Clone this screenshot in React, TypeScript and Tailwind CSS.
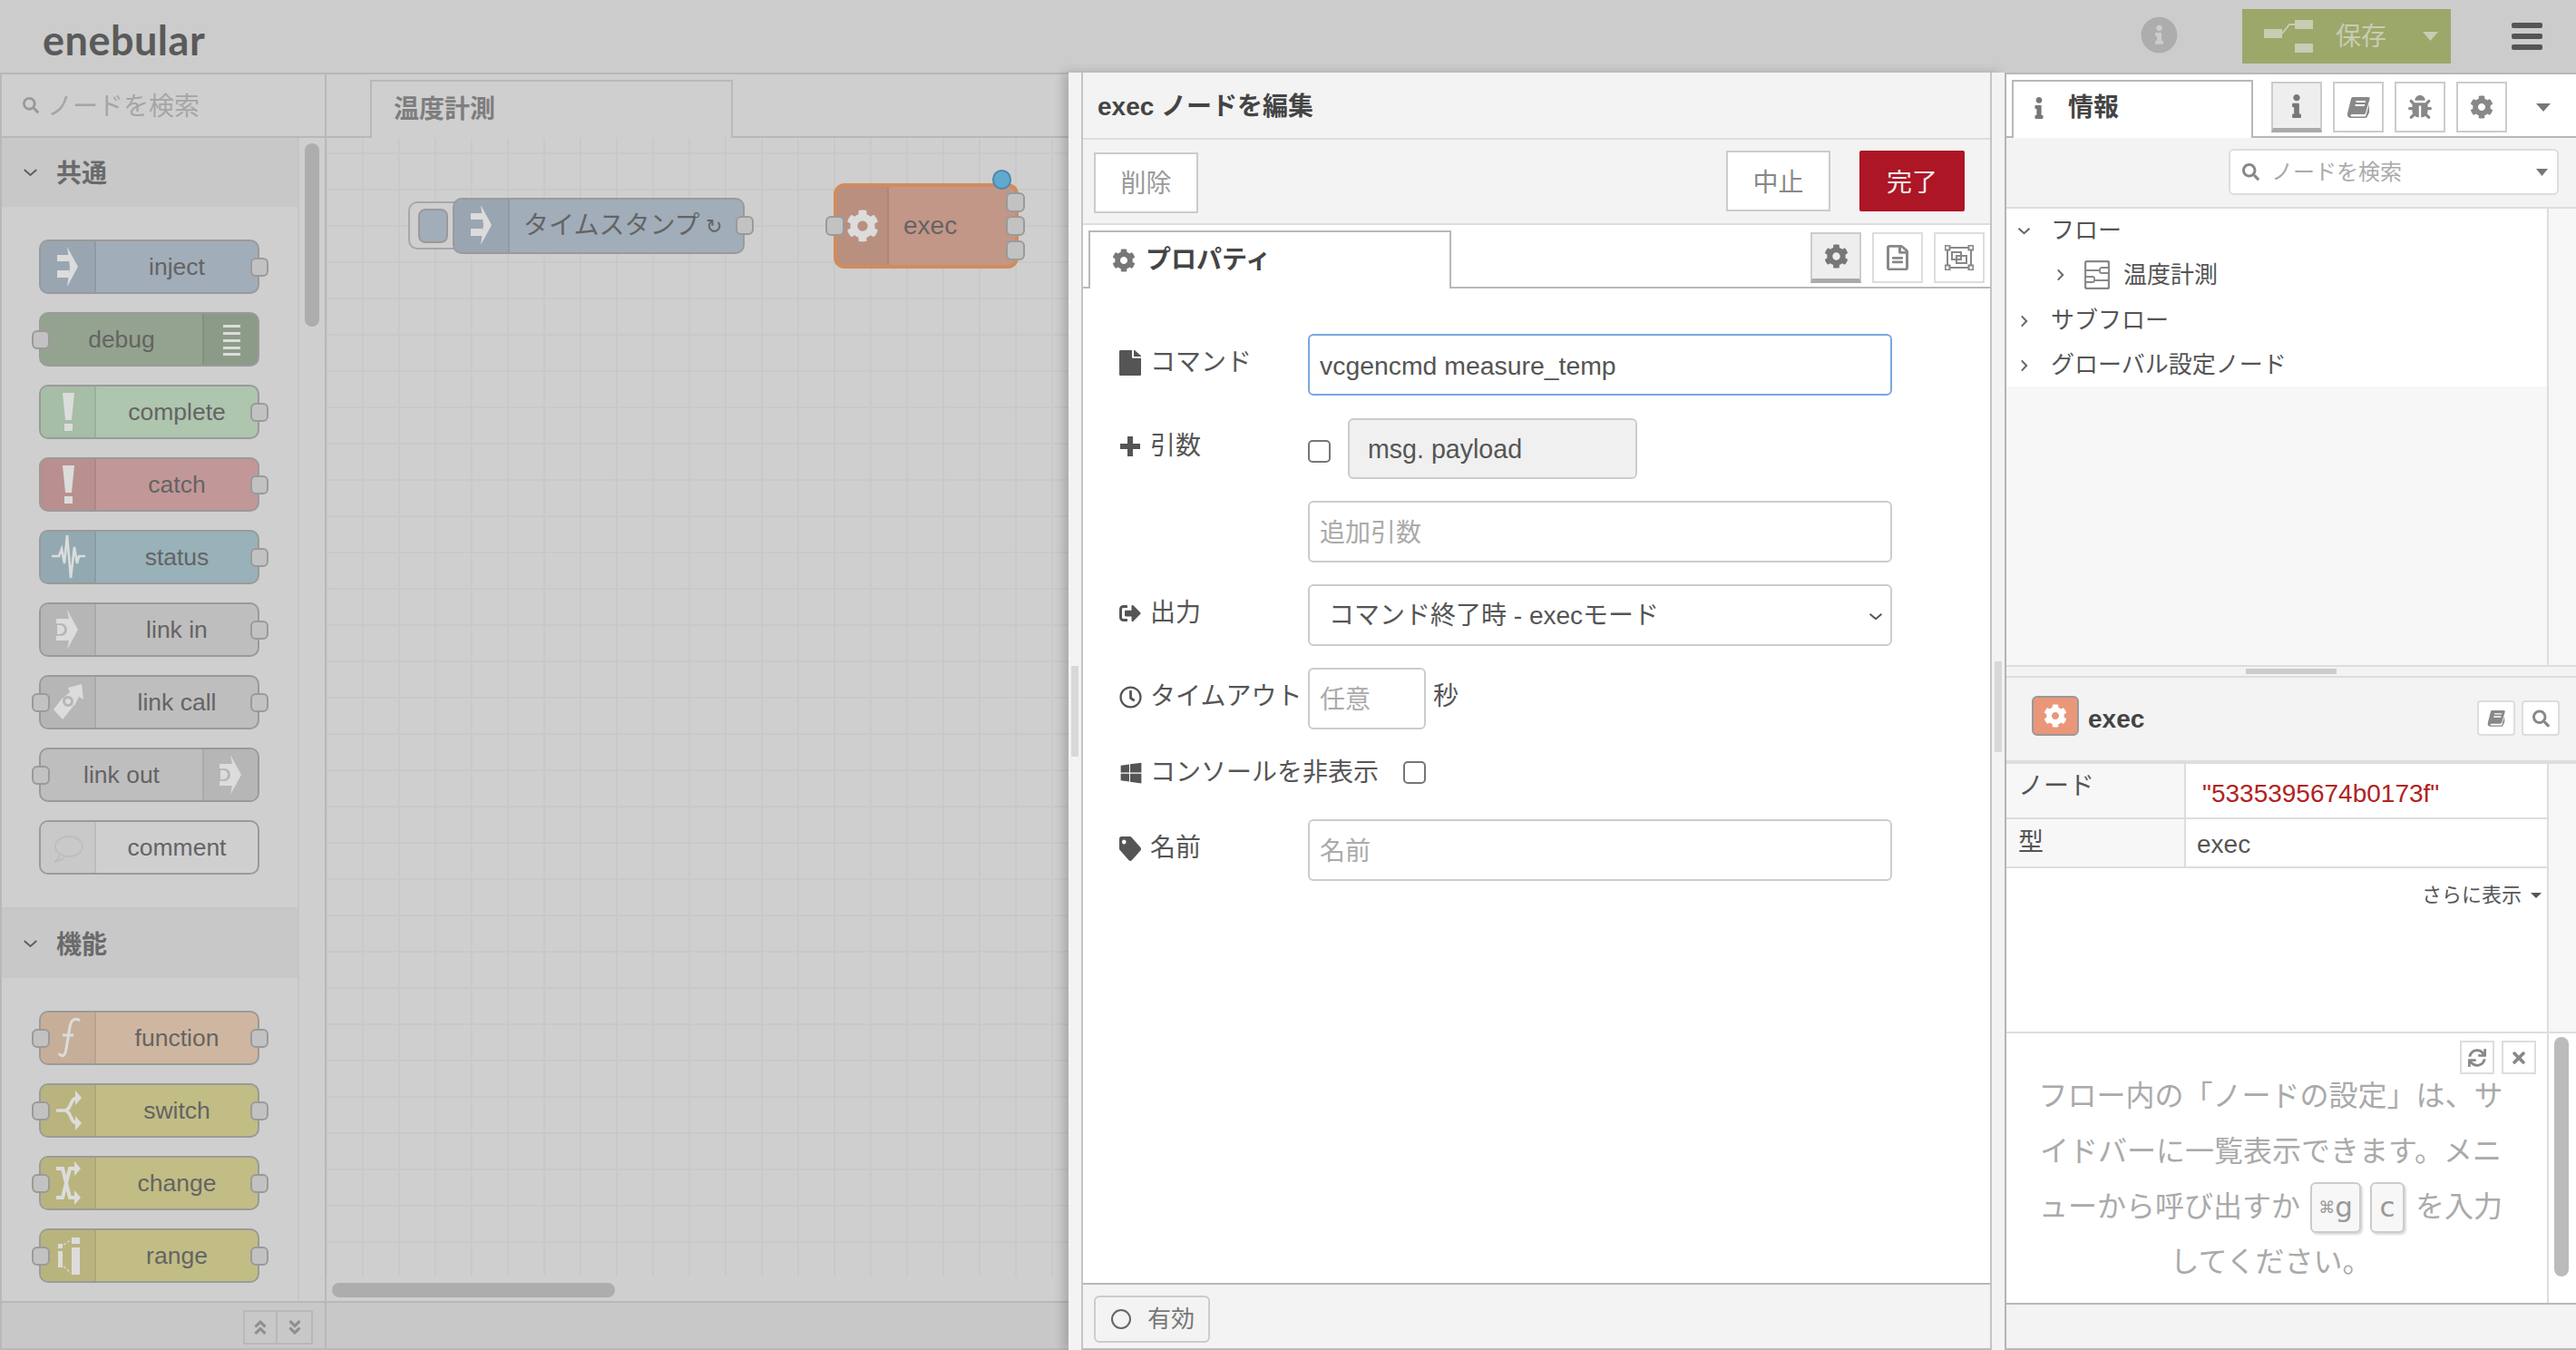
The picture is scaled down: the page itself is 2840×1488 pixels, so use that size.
import React from "react";
import {
  FaCog, FaFile, FaSignOutAlt, FaRegClock, FaWindows, FaTag, FaInfo, FaBug, FaSearch,
  FaTimes, FaSync, FaInfoCircle, FaRegFileAlt, FaAngleDoubleUp, FaAngleDoubleDown,
} from "react-icons/fa";

const FONT = "font-['Liberation_Sans','Noto_Sans_CJK_JP',sans-serif]";

function Caret({ w, h, cls }: { w: number; h: number; cls: string }) {
  return (
    <svg width={w} height={h} viewBox="0 0 10 6" preserveAspectRatio="none" className={cls}>
      <polygon points="0,0 10,0 5,6" fill="currentColor" />
    </svg>
  );
}
function Chev({ dir, w, h, cls }: { dir: "down" | "right"; w: number; h: number; cls: string }) {
  return (
    <svg width={w} height={h} viewBox="0 0 10 10" preserveAspectRatio="none" className={cls}>
      <path d={dir === "down" ? "M1 2 L5 8 L9 2" : "M2 1 L8 5 L2 9"} fill="none" stroke="currentColor" vectorEffect="non-scaling-stroke" strokeWidth="2" />
    </svg>
  );
}
function BookIcon({ w, h, cls }: { w: number; h: number; cls: string }) {
  return (
    <svg width={w} height={h} viewBox="0 0 26 24" className={cls}>
      <path
        d="M7 1 H24 C25.5 1 26 2 25.5 3.5 L21 18.5 C20.6 19.5 20 20 19 20 H6 C4 20 4 22.5 6 22.5 H21 L25 9 V18 L22.5 23.2 C22 23.8 21.5 24 21 24 H5 C2 24 0.5 21.5 1 19 L5 3 C5.3 1.8 6 1 7 1Z"
        fill="currentColor"
      />
      <path d="M10.5 6 H21 M9.5 10 H20" stroke="#fff" strokeWidth="1.8" />
    </svg>
  );
}

const ICON = "#dcdcdc";
function Svg({ children }: { children: React.ReactNode }) {
  return <svg width="63" height="60" viewBox="2 2 63 60" className="block">{children}</svg>;
}
const InjectIcon = () => (
  <Svg>
    <rect x="20" y="17" width="13" height="7" fill={ICON} />
    <rect x="20" y="34" width="13" height="8" fill={ICON} />
    <polygon points="31,8 43,30 31,52 34,30" fill={ICON} />
  </Svg>
);
const BangIcon = () => (
  <Svg>
    <polygon points="26,9 39,9 36,39 29,39" fill={ICON} />
    <rect x="28" y="43" width="9" height="8" fill={ICON} />
  </Svg>
);
const StatusIcon = () => (
  <Svg>
    <path d="M14 29 H22 L25 21 L28 37 L31 6 L35 53 L39 19 L42 37 L44 29 H51" fill="none" stroke={ICON} strokeWidth="2.6" />
  </Svg>
);
const LinkIcon = ({ bg }: { bg: string }) => (
  <Svg>
    <polygon points="19,18 33,18 31,8 43,30 31,52 33,42 19,42" fill={ICON} />
    <circle cx="24" cy="30" r="7" fill={bg} />
    <rect x="17" y="23" width="4" height="14" fill={bg} />
    <path d="M20 25 H23 A5 5 0 0 1 23 35 H20 Z" fill={ICON} />
  </Svg>
);
const LinkCallIcon = ({ bg }: { bg: string }) => (
  <Svg>
    <polygon points="32,14 47,10 49,27 44,24 39,34 27,25 34,19" fill={ICON} />
    <polygon points="16,38 26,25 38,34 26,49" fill={ICON} />
    <circle cx="32" cy="29" r="6" fill={bg} />
    <circle cx="32" cy="29" r="3" fill={ICON} />
  </Svg>
);
const CommentIcon = () => (
  <Svg>
    <ellipse cx="33" cy="29" rx="15" ry="11" fill="none" stroke="#bdbdbd" strokeWidth="1.8" />
    <path d="M23 38 C22 41 20 44 17 46 C22 45 27 43 29 40" fill="none" stroke="#bdbdbd" strokeWidth="1.8" />
  </Svg>
);
const FunctionIcon = () => (
  <Svg>
    <path d="M45 11 C40 7 35 10 34 18 L30 42 C29 50 25 52 22 47" fill="none" stroke={ICON} strokeWidth="3" />
    <path d="M26 27 H38" fill="none" stroke={ICON} strokeWidth="3" />
  </Svg>
);
const SwitchIcon = () => (
  <Svg>
    <path d="M19 30 H28 M42 16 C34 16 36 30 28 30 C36 30 34 44 42 44" fill="none" stroke={ICON} strokeWidth="3.6" />
    <polygon points="40,8 47,16 40,24" fill={ICON} />
    <polygon points="40,36 47,44 40,52" fill={ICON} />
  </Svg>
);
const ChangeIcon = () => (
  <Svg>
    <path d="M19 14 H26 L34 46 H41 M19 46 H26 L34 14 H41" fill="none" stroke={ICON} strokeWidth="4" />
    <polygon points="39,6 46,14 39,22" fill={ICON} />
    <polygon points="39,38 46,46 39,54" fill={ICON} />
  </Svg>
);
const RangeIcon = () => (
  <Svg>
    <rect x="36" y="10" width="9" height="7" fill={ICON} />
    <rect x="36" y="21" width="9" height="30" fill={ICON} />
    <rect x="21" y="17" width="5" height="5" fill={ICON} />
    <rect x="21" y="25" width="5" height="18" fill={ICON} />
    <path d="M27 18 L35 13 M27 42 L35 49" stroke={ICON} strokeWidth="1.2" strokeDasharray="3 2" />
  </Svg>
);
const DebugIcon = () => (
  <Svg>
    <rect x="23" y="14" width="19" height="3" fill={ICON} />
    <rect x="23" y="22" width="19" height="3" fill={ICON} />
    <rect x="23" y="30" width="19" height="3" fill={ICON} />
    <rect x="23" y="38" width="19" height="3" fill={ICON} />
    <rect x="23" y="45" width="19" height="3" fill={ICON} />
  </Svg>
);

function Port({ side }: { side: "l" | "r" }) {
  return (
    <div
      className={
        "absolute top-[18px] h-[21px] w-[20px] rounded-[6px] border-2 border-[#9a9a9a] bg-[#c2c2c2] " +
        (side === "l" ? "left-[-10px]" : "right-[-12px]")
      }
    />
  );
}

type N = {
  label: string;
  body: string;
  tint: string;
  icon: React.ReactNode;
  inP?: boolean;
  outP?: boolean;
  right?: boolean;
};

function PaletteNode({ n }: { n: N }) {
  const iconBox = (
    <div className={"h-full w-[61px] shrink-0 " + n.tint + " " + (n.right ? "border-l-2 border-[#00000010]" : "border-r-2 border-[#00000010]")}>{n.icon}</div>
  );
  return (
    <div className={"relative flex h-[60px] w-[243px] items-center rounded-[10px] border-2 border-[#9a9a9a] " + n.body}>
      {!n.right && iconBox}
      <div className="flex-1 overflow-hidden whitespace-nowrap pt-[1px] text-center text-[26.5px] text-[#646464]">{n.label}</div>
      {n.right && iconBox}
      {n.inP && <Port side="l" />}
      {n.outP && <Port side="r" />}
    </div>
  );
}

const common: N[] = [
  { label: "inject", body: "bg-[#a1adb9] overflow-visible", tint: "bg-[#99a5b1] rounded-l-[8px]", icon: <InjectIcon />, outP: true },
  { label: "debug", body: "bg-[#94a38f]", tint: "bg-[#8c9b87] rounded-r-[8px]", icon: <DebugIcon />, inP: true, right: true },
  { label: "complete", body: "bg-[#aec5ae]", tint: "bg-[#a6bda6] rounded-l-[8px]", icon: <BangIcon />, outP: true },
  { label: "catch", body: "bg-[#c29797]", tint: "bg-[#b98f8f] rounded-l-[8px]", icon: <BangIcon />, outP: true },
  { label: "status", body: "bg-[#99b1b9]", tint: "bg-[#92a9b1] rounded-l-[8px]", icon: <StatusIcon />, outP: true },
  { label: "link in", body: "bg-[#bebebe]", tint: "bg-[#b6b6b6] rounded-l-[8px]", icon: <LinkIcon bg="#b6b6b6" />, outP: true },
  { label: "link call", body: "bg-[#bebebe]", tint: "bg-[#b6b6b6] rounded-l-[8px]", icon: <LinkCallIcon bg="#b6b6b6" />, inP: true, outP: true },
  { label: "link out", body: "bg-[#bebebe]", tint: "bg-[#b6b6b6] rounded-r-[8px]", icon: <LinkIcon bg="#b6b6b6" />, inP: true, right: true },
  { label: "comment", body: "bg-[#cfcfcf]", tint: "bg-[#c9c9c9] rounded-l-[8px]", icon: <CommentIcon /> },
];
const funcs: N[] = [
  { label: "function", body: "bg-[#cfb6a0]", tint: "bg-[#c7ae98] rounded-l-[8px]", icon: <FunctionIcon />, inP: true, outP: true },
  { label: "switch", body: "bg-[#c2bd85]", tint: "bg-[#b9b47d] rounded-l-[8px]", icon: <SwitchIcon />, inP: true, outP: true },
  { label: "change", body: "bg-[#c2bd85]", tint: "bg-[#b9b47d] rounded-l-[8px]", icon: <ChangeIcon />, inP: true, outP: true },
  { label: "range", body: "bg-[#c2bd85]", tint: "bg-[#b9b47d] rounded-l-[8px]", icon: <RangeIcon />, inP: true, outP: true },
];

function CatHead({ label, top }: { label: string; top?: boolean }) {
  return (
    <div className={"flex items-center bg-[#c8c8c8] pl-[23px] " + (top ? "h-[78px] border-t-2 border-[#c6c6c6]" : "h-[76px]")}>
      <Chev dir="down" w={17} h={10} cls="text-[#5f5f5f]" />
      <span className="ml-[20px] pt-[4px] text-[28px] font-bold text-[#6a6a6a]">{label}</span>
    </div>
  );
}

function Palette() {
  return (
    <div className="flex w-[360px] shrink-0 flex-col border-l-2 border-r-2 border-t-2 border-[#b8b8b8] bg-[#cfcfcf]">
      <div className="flex h-[70px] shrink-0 items-center border-b-2 border-[#b8b8b8] pl-[23px]">
        <FaSearch className="h-[18px] w-[18px] text-[#9a9a9a]" />
        <span className="ml-[9px] pt-[4px] text-[28px] text-[#a5a5a5]">ノードを検索</span>
      </div>
      <div className="flex min-h-0 flex-1 overflow-hidden">
        <div className="w-[328px] border-r-2 border-[#c6c6c6]">
          <CatHead label="共通" />
          <div className="flex flex-col gap-[20px] py-[36px] pl-[41px]">
            {common.map((n) => <PaletteNode key={n.label} n={n} />)}
          </div>
          <CatHead label="機能" top />
          <div className="flex flex-col gap-[20px] pl-[41px] pt-[36px]">
            {funcs.map((n) => <PaletteNode key={n.label} n={n} />)}
          </div>
        </div>
        <div className="pl-[6px] pt-[6px]">
          <div className="h-[202px] w-[16px] rounded-[8px] bg-[#adadad]" />
        </div>
      </div>
      <div className="flex h-[54px] shrink-0 items-center justify-end border-b-2 border-t-2 border-[#b8b8b8] bg-[#c8c8c8] pr-[13px] pt-[4px]">
        <div className="flex h-[38px] border-2 border-[#b8b8b8]">
          <div className="flex w-[36px] items-center justify-center border-r-2 border-[#b8b8b8] text-[#8f8f8f]"><FaAngleDoubleUp className="h-[20px] w-[18px]" /></div>
          <div className="flex w-[37px] items-center justify-center text-[#8f8f8f]"><FaAngleDoubleDown className="h-[20px] w-[18px]" /></div>
        </div>
      </div>
    </div>
  );
}

function Workspace() {
  return (
    <div className="flex w-[818px] shrink-0 flex-col border-t-2 border-[#b8b8b8] bg-[#cfcfcf]">
      <div className="flex h-[70px] shrink-0 items-end border-b-2 border-[#b8b8b8] pl-[48px]">
        <div className="-mb-[2px] flex h-[64px] w-[400px] items-center border-2 border-b-0 border-[#b8b8b8] bg-[#cfcfcf] pl-[24px]">
          <span className="text-[28px] font-bold text-[#7e7e7e]">温度計測</span>
        </div>
      </div>
      <div className="relative min-h-0 flex-1 overflow-hidden bg-[linear-gradient(to_right,#c9c9c9_2px,transparent_2px),linear-gradient(to_bottom,#c9c9c9_2px,transparent_2px)] bg-[size:40px_40px] bg-[position:39px_16px]">
        {/* inject node */}
        <div className="absolute left-[90px] top-[70px] flex h-[53px] w-[70px] items-center rounded-[10px] border-2 border-[#a8a8a8] bg-[#cfcfcf] pl-[9px]">
          <div className="h-[38px] w-[33px] rounded-[8px] border-2 border-[#9a9a9a] bg-[#a1adb9]" />
        </div>
        <div className="absolute left-[139px] top-[66px] flex h-[62px] w-[322px] items-center rounded-[10px] border-2 border-[#9a9a9a] bg-[#a1adb9]">
          <div className="h-full w-[61px] shrink-0 rounded-l-[8px] border-r-2 border-[#00000010] bg-[#99a5b1]"><InjectIcon /></div>
          <span className="ml-[15px] whitespace-nowrap text-[28px] text-[#646464]">タイムスタンプ</span>
          <span className="ml-[6px] text-[22px] text-[#646464]">↻</span>
          <Port side="r" />
        </div>
        {/* exec node */}
        <div className="absolute left-[559px] top-[50px] flex h-[94px] w-[204px] items-center rounded-[12px] border-4 border-[#d08c5b] bg-[#c29788]">
          <div className="flex h-full w-[57px] shrink-0 items-center justify-center rounded-l-[8px] border-r-2 border-[#00000010] bg-[#b98f80]">
            <FaCog className="h-[36px] w-[36px] text-[#dcdcdc]" />
          </div>
          <span className="ml-[16px] text-[28px] text-[#646464]">exec</span>
          <div className="absolute left-[-13px] top-[32px] h-[22px] w-[21px] rounded-[6px] border-2 border-[#9a9a9a] bg-[#c2c2c2]" />
          <div className="absolute right-[-11px] top-[6px] h-[22px] w-[21px] rounded-[6px] border-2 border-[#9a9a9a] bg-[#c2c2c2]" />
          <div className="absolute right-[-11px] top-[32px] h-[22px] w-[21px] rounded-[6px] border-2 border-[#9a9a9a] bg-[#c2c2c2]" />
          <div className="absolute right-[-11px] top-[59px] h-[22px] w-[21px] rounded-[6px] border-2 border-[#9a9a9a] bg-[#c2c2c2]" />
          <div className="absolute right-[4px] top-[-19px] h-[22px] w-[21px] rounded-full border-2 border-[#5088a8] bg-[#62a9cf]" />
        </div>
      </div>
      <div className="h-[27px] shrink-0 bg-[#cfcfcf] pl-[6px] pt-[7px]">
        <div className="h-[16px] w-[312px] rounded-[8px] bg-[#adadad]" />
      </div>
      <div className="h-[54px] shrink-0 border-b-2 border-t-2 border-[#b8b8b8] bg-[#c8c8c8]" />
    </div>
  );
}

function Field({ placeholder, value, cls }: { placeholder?: string; value?: string; cls: string }) {
  return (
    <input
      readOnly
      placeholder={placeholder}
      defaultValue={value}
      className={"h-[68px] rounded-[6px] border-2 bg-white pl-[11px] pt-[2px] text-[28.4px] text-[#555] outline-none placeholder:text-[28px] placeholder:text-[#aaa] " + cls}
    />
  );
}

function Label({ icon, text, w }: { icon: React.ReactNode; text: string; w?: string }) {
  return (
    <div className={"flex h-full shrink-0 items-center pb-[4px] text-[28px] text-[#555] " + (w ?? "w-[208px]")}>
      <span className="flex w-[34px] shrink-0 items-center text-[#555]">{icon}</span>
      <span className="whitespace-nowrap">{text}</span>
    </div>
  );
}

function SquareBtn({ children, active }: { children: React.ReactNode; active?: boolean }) {
  return (
    <div className={"flex h-[56px] w-[56px] items-center justify-center text-[#777] " + (active ? "border-2 border-b-[5px] border-[#ccc] border-b-[#aaa] bg-[#eeeeee]" : "border-2 border-[#ddd] bg-white")}>
      {children}
    </div>
  );
}

const CHECK = "appearance-none h-[25px] w-[25px] rounded-[5px] border-2 border-[#767676] bg-white shrink-0";

function Tray() {
  return (
    <div className="relative z-10 flex w-[1032px] shrink-0 bg-[#f3f3f3] shadow-[-6px_0_10px_rgba(0,0,0,0.18)]">
      <div className="flex w-[14px] shrink-0 items-center justify-center">
        <div className="h-[100px] w-[8px] bg-[#d8d8d8]" />
      </div>
      <div className="flex w-[1004px] shrink-0 flex-col border-b-2 border-l-2 border-r-2 border-[#c4c4c4] border-b-[#bbb] bg-white">
        <div className="flex h-[74px] shrink-0 items-center border-b-2 border-[#ddd] bg-[#f3f3f3] pl-[16px]">
          <span className="pt-[4px] text-[28px] font-bold text-[#444]">exec ノードを編集</span>
        </div>
        <div className="flex h-[94px] shrink-0 items-start border-b-2 border-[#ddd] bg-[#f3f3f3] pl-[12px] pr-[28px]">
          <div className="mt-[14px] flex h-[67px] w-[115px] items-center justify-center border-2 border-[#ccc] bg-white pt-[3px] text-[28px] text-[#999]">削除</div>
          <div className="ml-auto mt-[12px] flex h-[67px] w-[115px] items-center justify-center border-2 border-[#ccc] bg-white pt-[4px] text-[28px] text-[#888]">中止</div>
          <div className="ml-[32px] mt-[12px] flex h-[67px] w-[116px] items-center justify-center rounded-[2px] bg-[#ad1625] pt-[4px] text-[28px] text-[#eee]">完了</div>
        </div>
        <div className="flex h-[70px] shrink-0 items-end border-b-2 border-[#b8b8b8] pl-[6px] pr-[6px]">
          <div className="-mb-[2px] flex h-[64px] w-[400px] items-center border-2 border-b-0 border-[#b8b8b8] bg-white pl-[24px]">
            <FaCog className="h-[26px] w-[26px] text-[#777]" />
            <span className="ml-[11px] text-[28px] font-bold text-[#444]">プロパティ</span>
          </div>
          <div className="mb-[4px] ml-auto flex gap-[12px]">
            <SquareBtn active><FaCog className="h-[27px] w-[27px]" /></SquareBtn>
            <SquareBtn><FaRegFileAlt className="h-[28px] w-[24px] text-[#888]" preserveAspectRatio="none" /></SquareBtn>
            <SquareBtn>
              <svg width="32" height="28" viewBox="0 0 32 28" fill="none" stroke="#888" strokeWidth="2">
                <rect x="3" y="3" width="26" height="22" />
                <rect x="0.5" y="0.5" width="5" height="5" fill="#fff" />
                <rect x="26.5" y="0.5" width="5" height="5" fill="#fff" />
                <rect x="0.5" y="22.5" width="5" height="5" fill="#fff" />
                <rect x="26.5" y="22.5" width="5" height="5" fill="#fff" />
                <rect x="8" y="8" width="10" height="8" />
                <rect x="13" y="12" width="11" height="8" />
              </svg>
            </SquareBtn>
          </div>
        </div>
        <div className="flex min-h-0 flex-1 flex-col pl-[40px] pt-[50px]">
          <div className="mb-[24px] flex h-[68px] items-center">
            <Label icon={<FaFile className="h-[28px] w-[24px]" preserveAspectRatio="none" />} text="コマンド" />
            <Field value="vcgencmd measure_temp" cls="w-[644px] border-[#7aa6e0]" />
          </div>
          <div className="mb-[24px] flex h-[68px] items-center">
            <Label
              icon={
                <svg width="24" height="24" viewBox="0 0 24 24" className="block">
                  <path d="M9 1 H15 V9 H23 V15 H15 V23 H9 V15 H1 V9 H9 Z" fill="currentColor" />
                </svg>
              }
              text="引数"
            />
            <input type="checkbox" readOnly className={CHECK + " mt-[7px]"} />
            <div className="ml-[19px] flex h-[67px] w-[319px] items-center rounded-[6px] border-2 border-[#ccc] bg-[#f0f0f0] pl-[20px] pt-[2px] text-[28.6px] text-[#555]">msg. payload</div>
          </div>
          <div className="mb-[24px] flex h-[68px] items-center">
            <div className="w-[208px] shrink-0" />
            <Field placeholder="追加引数" cls="w-[644px] border-[#ccc]" />
          </div>
          <div className="mb-[24px] flex h-[68px] items-center">
            <Label icon={<FaSignOutAlt className="h-[26px] w-[24px]" />} text="出力" />
            <div className="flex h-[68px] w-[644px] items-center rounded-[6px] border-2 border-[#ccc] bg-white pl-[21px] pr-[8px] pt-[2px] text-[28px] text-[#555]">
              <span>コマンド終了時 - execモード</span>
              <Chev dir="down" w={16} h={9} cls="ml-auto text-[#555]" />
            </div>
          </div>
          <div className="mb-[24px] flex h-[68px] items-center">
            <Label icon={<FaRegClock className="h-[25px] w-[25px]" />} text="タイムアウト" />
            <Field placeholder="任意" cls="w-[130px] border-[#ccc]" />
            <span className="ml-[8px] pb-[4px] text-[28px] text-[#555]">秒</span>
          </div>
          <div className="mb-[24px] flex h-[51px] items-center">
            <Label icon={<FaWindows className="h-[26px] w-[26px]" />} text="コンソールを非表示" w="w-[285px]" />
            <input type="checkbox" readOnly className={CHECK + " mb-[4px] ml-[28px]"} />
          </div>
          <div className="flex h-[68px] items-center">
            <Label icon={<FaTag className="h-[27px] w-[24px]" preserveAspectRatio="none" />} text="名前" />
            <Field placeholder="名前" cls="w-[644px] border-[#ccc]" />
          </div>
        </div>
        <div className="flex h-[72px] shrink-0 items-center border-t-2 border-[#b8b8b8] bg-[#f3f3f3] pl-[12px] pt-[6px]">
          <div className="flex h-[52px] w-[128px] items-center rounded-[6px] border-2 border-[#ccc] pl-[17px] text-[26px] text-[#777]">
            <span className="h-[22px] w-[22px] rounded-full border-2 border-[#666]" />
            <span className="ml-[18px]">有効</span>
          </div>
        </div>
      </div>
      <div className="flex w-[14px] shrink-0 items-center justify-center pb-[10px]">
        <div className="h-[100px] w-[8px] bg-[#d8d8d8]" />
      </div>
    </div>
  );
}

function SideBtn({ children, active }: { children: React.ReactNode; active?: boolean }) {
  return (
    <div className={"flex h-[56px] w-[56px] items-center justify-center text-[#777] " + (active ? "border-2 border-b-[5px] border-[#ccc] border-b-[#aaa] bg-[#eeeeee] text-[#666]" : "border-2 border-[#ccc] bg-white")}>
      {children}
    </div>
  );
}

function TreeRow({ label, open, indent, icon, h }: { label: string; open?: boolean; indent?: boolean; icon?: React.ReactNode; h: string }) {
  return (
    <div className={"flex items-center text-[26px] text-[#555] " + h + " " + (indent ? "pl-[52px]" : "pl-[12px]")}>
      {open ? <Chev dir="down" w={15} h={9} cls="text-[#666]" /> : <Chev dir="right" w={9} h={14} cls="ml-[3px] mr-[3px] text-[#666]" />}
      {icon ? <span className="ml-[19px]">{icon}</span> : null}
      <span className={icon ? "ml-[15px]" : "ml-[22px]"}>{label}</span>
    </div>
  );
}

function Kbd({ children, w }: { children: React.ReactNode; w: string }) {
  return (
    <span className={"inline-flex h-[56px] items-center justify-center rounded-[6px] border-2 border-[#ccc] bg-[#f7f7f7] font-['DejaVu_Sans',sans-serif] text-[31px] text-[#999] shadow-[2px_2px_2px_#ddd] " + w}>
      {children}
    </span>
  );
}

function Sidebar() {
  return (
    <div className="flex w-[630px] shrink-0 flex-col border-b-2 border-l-2 border-t-2 border-[#b8b8b8] bg-[#f3f3f3]">
      <div className="flex h-[70px] shrink-0 items-start border-b-2 border-[#b8b8b8] bg-white pl-[6px]">
        <div className="relative mt-[6px] flex h-[64px] w-[266px] items-center border-2 border-b-0 border-[#b8b8b8] bg-white pb-[4px] pl-[22px]">
          <FaInfo className="h-[24px] w-[12px] text-[#777]" />
          <span className="ml-[26px] text-[28px] font-bold text-[#444]">情報</span>
        </div>
        <div className="ml-[20px] mt-[8px] flex gap-[12px]">
          <SideBtn active><FaInfo className="h-[26px] w-[12px]" /></SideBtn>
          <SideBtn><BookIcon w={26} h={24} cls="text-[#888]" /></SideBtn>
          <SideBtn><FaBug className="h-[26px] w-[26px] text-[#888]" /></SideBtn>
          <SideBtn><FaCog className="h-[26px] w-[26px] text-[#888]" /></SideBtn>
        </div>
        <Caret w={16} h={9} cls="ml-[32px] mt-[32px] text-[#777]" />
      </div>
      <div className="flex h-[78px] shrink-0 items-start justify-end border-b-2 border-[#ddd] pr-[19px] pt-[12px]">
        <div className="flex h-[51px] w-[364px] items-center rounded-[6px] border-2 border-[#ddd] bg-white pl-[13px] pr-[10px]">
          <FaSearch className="h-[19px] w-[19px] text-[#888]" />
          <span className="ml-[13px] text-[24px] text-[#aaa]">ノードを検索</span>
          <Caret w={13} h={8} cls="ml-auto text-[#777]" />
        </div>
      </div>
      <div className="flex h-[503px] shrink-0">
        <div className="flex w-[596px] flex-col bg-[#f7f7f7]">
          <div className="bg-white">
            <TreeRow label="フロー" open h="h-[48px]" />
            <TreeRow
              label="温度計測"
              indent
              h="h-[50px]"
              icon={
                <svg width="28" height="32" viewBox="0 0 28 32" fill="none" stroke="#888" strokeWidth="2.4" className="block">
                  <rect x="1" y="1" width="26" height="30" rx="2" />
                  <path d="M1 11 H27 M1 22 H27" strokeWidth="1.8" />
                  <rect x="17" y="8" width="10" height="6" rx="2" fill="#fff" strokeWidth="1.8" />
                  <rect x="1" y="18" width="10" height="6" rx="2" fill="#fff" strokeWidth="1.8" />
                </svg>
              }
            />
            <TreeRow label="サブフロー" h="h-[51px]" />
            <TreeRow label="グローバル設定ノード" h="h-[47px]" />
          </div>
        </div>
        <div className="flex-1 border-l-2 border-[#ddd] bg-[#f7f7f7]" />
      </div>
      <div className="flex h-[14px] shrink-0 items-center justify-center border-b-2 border-t-2 border-[#ddd]">
        <div className="h-[6px] w-[100px] bg-[#ccc]" />
      </div>
      <div className="flex h-[95px] shrink-0 items-start border-b-[4px] border-[#ddd] pl-[28px] pt-[20px]">
        <div className="flex h-[44px] w-[52px] items-center justify-center rounded-[6px] border-2 border-[#999] bg-[#ea9679]">
          <FaCog className="h-[26px] w-[26px] text-white" />
        </div>
        <span className="ml-[10px] mt-[5px] text-[28px] font-bold text-[#444]">exec</span>
        <div className="ml-auto mr-[18px] mt-[5px] flex gap-[7px]">
          <div className="flex h-[39px] w-[42px] items-center justify-center rounded-[4px] border-2 border-[#ddd] bg-white"><BookIcon w={20} h={19} cls="text-[#888]" /></div>
          <div className="flex h-[39px] w-[42px] items-center justify-center rounded-[4px] border-2 border-[#ddd] bg-white"><FaSearch className="h-[20px] w-[19px] text-[#888]" /></div>
        </div>
      </div>
      <div className="flex h-[295px] shrink-0">
        <div className="flex w-[596px] flex-col bg-white">
          <div className="flex h-[61px] border-b-2 border-[#ddd] text-[28px] text-[#555]">
            <div className="w-[198px] border-r-2 border-[#ddd] bg-[#f7f7f7] pl-[13px] pt-[4px]">ノード</div>
            <div className="pl-[18px] pt-[12px] text-[#b22222]">&quot;5335395674b0173f&quot;</div>
          </div>
          <div className="flex h-[54px] border-b-2 border-[#ddd] text-[28px] text-[#555]">
            <div className="w-[198px] border-r-2 border-[#ddd] bg-[#f7f7f7] pl-[13px] pt-[5px]">型</div>
            <div className="pl-[12px] pt-[7px]">exec</div>
          </div>
          <div className="flex items-center justify-end pr-[6px] pt-[13px] text-[22px] text-[#555]">
            <span>さらに表示</span>
            <Caret w={12} h={6} cls="ml-[10px] text-[#555]" />
          </div>
        </div>
        <div className="flex-1 border-l-2 border-[#ddd] bg-[#f7f7f7]" />
      </div>
      <div className="flex min-h-0 flex-1 border-t-2 border-[#ddd] bg-white">
        <div className="w-[596px] shrink-0">
          <div className="flex justify-end gap-[8px] pr-[12px] pt-[8px]">
            <div className="flex h-[37px] w-[38px] items-center justify-center border-2 border-[#ddd] text-[#888]"><FaSync className="h-[22px] w-[20px]" /></div>
            <div className="flex h-[37px] w-[38px] items-center justify-center border-2 border-[#ddd] text-[#888]"><FaTimes className="h-[20px] w-[18px]" /></div>
          </div>
          <div className="-mt-[6px] pr-[13px] text-center text-[32px] leading-[61px] text-[#aaa]">
            <div className="whitespace-nowrap">フロー内の「ノードの設定」は、サ</div>
            <div className="whitespace-nowrap">イドバーに一覧表示できます。メニ</div>
            <div className="flex items-center justify-center whitespace-nowrap">
              <span>ューから呼び出すか</span>
              <Kbd w="ml-[11px] w-[56px]"><span className="text-[18px]">⌘</span>g</Kbd>
              <Kbd w="ml-[10px] w-[38px]">c</Kbd>
              <span className="ml-[12px]">を入力</span>
            </div>
            <div className="whitespace-nowrap">してください。</div>
          </div>
        </div>
        <div className="flex-1 border-l-2 border-[#ddd] pl-[6px] pt-[4px]">
          <div className="h-[264px] w-[16px] rounded-[8px] bg-[#bbb]" />
        </div>
      </div>
      <div className="h-[50px] shrink-0 border-t-2 border-[#b8b8b8]" />
    </div>
  );
}

function Header() {
  return (
    <div className="flex h-[80px] shrink-0 items-center bg-[#cccccc]">
      <span className="ml-[47px] pt-[8px] font-['Lato',sans-serif] text-[45px] font-bold leading-none tracking-[0.5px] text-[#5a5a5a]">enebular</span>
      <div className="ml-auto flex items-center">
        <FaInfoCircle className="mb-[3px] mr-[71px] h-[41px] w-[41px] text-[#adadad]" />
        <div className="flex h-[60px] w-[230px] items-center bg-[#9ca76a] pl-[24px] text-[#c8ccb2]">
          <svg width="54" height="36" viewBox="0 0 54 36" className="block shrink-0">
            <rect x="0" y="10" width="20" height="10" fill="currentColor" />
            <rect x="34" y="0" width="20" height="10" fill="currentColor" />
            <rect x="34" y="26" width="20" height="10" fill="currentColor" />
            <path d="M20 15 L28 5 H34" fill="none" stroke="currentColor" strokeWidth="2" />
          </svg>
          <span className="ml-[25px] pt-[2px] text-[28px]">保存</span>
          <Caret w={17} h={10} cls="ml-[40px]" />
        </div>
        <div className="ml-[67px] mr-[37px] flex h-[30px] w-[34px] flex-col justify-between">
          <div className="h-[6px] rounded-[2px] bg-[#555]" />
          <div className="h-[6px] rounded-[2px] bg-[#555]" />
          <div className="h-[6px] rounded-[2px] bg-[#555]" />
        </div>
      </div>
    </div>
  );
}

export default function App() {
  return (
    <div className={"flex h-[1488px] w-[2840px] flex-col overflow-hidden " + FONT}>
      <Header />
      <div className="flex min-h-0 flex-1">
        <Palette />
        <Workspace />
        <Tray />
        <Sidebar />
      </div>
    </div>
  );
}
